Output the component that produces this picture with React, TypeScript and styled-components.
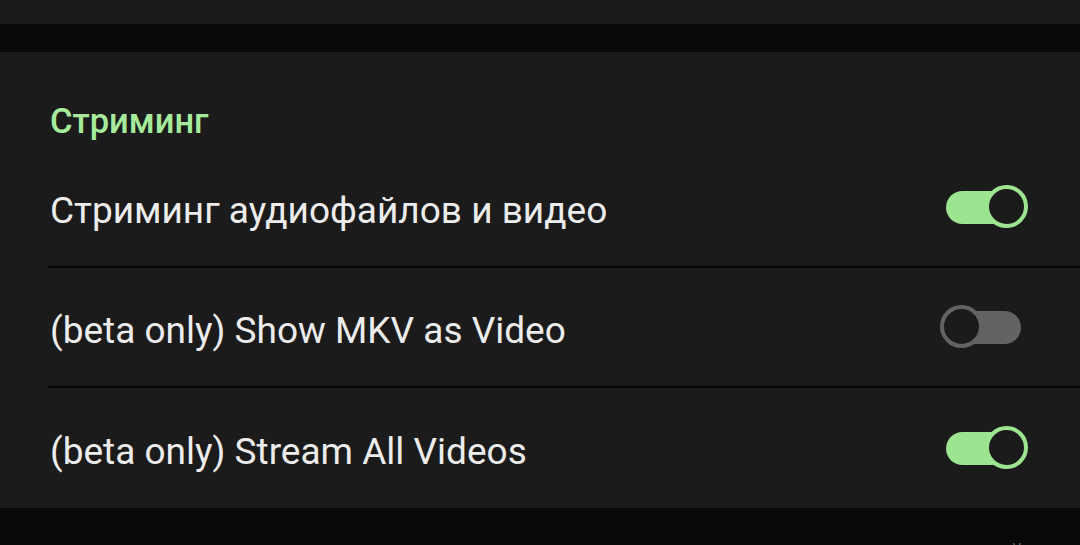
import React from 'react'
import styled, { createGlobalStyle } from 'styled-components'

const GlobalStyle = createGlobalStyle`
  html, body {
    margin: 0;
    padding: 0;
    background: #0a0a0a;
  }
  body {
    font-family: Roboto, "Noto Sans", "Liberation Sans", sans-serif;
    -webkit-font-smoothing: antialiased;
  }
`

const Page = styled.div`
  width: 1080px;
  height: 545px;
  overflow: hidden;
  display: flex;
  flex-flow: column;
  background: #0a0a0a;
`

const TopStrip = styled.div`
  height: 24px;
  flex-shrink: 0;
  background: #1b1b1b;
  margin-bottom: 28px;
`

const Panel = styled.section`
  flex-shrink: 0;
  background: #1b1b1b;
  padding-left: 48px;
`

const SectionTitle = styled.div`
  height: 96px;
  box-sizing: border-box;
  padding: 49px 0 0 2px;
  color: #a6eb9c;
  font-size: 34.5px;
  font-weight: 500;
  line-height: 40px;
`

const Row = styled.div`
  display: flex;
  align-items: center;
  justify-content: space-between;
  height: 120px;
  box-sizing: border-box;
  padding-left: 2px;
  padding-right: 52px;

  &:not(:last-child) {
    border-bottom: 2px solid #070707;
  }
`

const Label = styled.div`
  color: #ededed;
  font-size: 37px;
  line-height: 40px;
  margin-top: 7px;
`

const SwitchBox = styled.div`
  position: relative;
  width: 88px;
  height: 48px;
  flex-shrink: 0;
`

const Track = styled.div<{ $on: boolean }>`
  position: absolute;
  left: 6px;
  top: 8px;
  width: 75px;
  height: 33px;
  border-radius: 17px;
  background: ${p => (p.$on ? '#9ce48f' : '#636363')};
`

const Thumb = styled.div<{ $on: boolean }>`
  position: absolute;
  top: 2px;
  left: ${p => (p.$on ? '45px' : '0')};
  width: 43px;
  height: 43px;
  box-sizing: border-box;
  border-radius: 50%;
  border: 4px solid ${p => (p.$on ? '#9ce48f' : '#636363')};
  background: #1b1b1b;
`

const NextSection = styled.section`
  flex: 1;
  display: flex;
  justify-content: space-between;
  padding: 30px 58px 0 52px;
  color: #6a6a6a;
  font-size: 34px;
  line-height: 40px;
`

const Switch = ({ on }: { on: boolean }) => (
  <SwitchBox>
    <Track $on={on} />
    <Thumb $on={on} />
  </SwitchBox>
)

const settings = [
  { label: 'Стриминг аудиофайлов и видео', on: true },
  { label: '(beta only) Show MKV as Video', on: false },
  { label: '(beta only) Stream All Videos', on: true },
]

export default function App() {
  return (
    <Page>
      <GlobalStyle />
      <TopStrip />
      <Panel>
        <SectionTitle>Стриминг</SectionTitle>
        {settings.map(s => (
          <Row key={s.label}>
            <Label>{s.label}</Label>
            <Switch on={s.on} />
          </Row>
        ))}
      </Panel>
      <NextSection>
        <span>Транскодирование</span>
        <span>˅</span>
      </NextSection>
    </Page>
  )
}
